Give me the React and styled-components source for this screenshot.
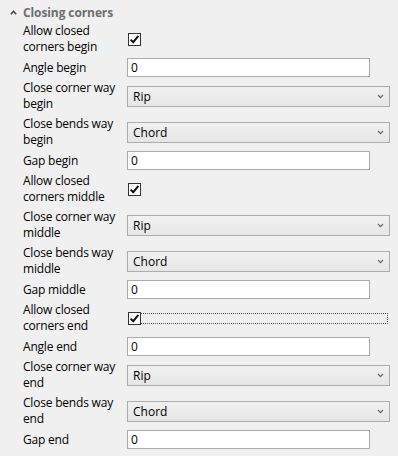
import React from "react";
import styled, { createGlobalStyle } from "styled-components";

const Global = createGlobalStyle`
  html, body { margin: 0; padding: 0; background: #f0f0f0; }
  body { font-family: "Open Sans", "Noto Sans", sans-serif; font-size: 12px; color: #000; }
`;

const Panel = styled.div`
  width: 398px;
  height: 456px;
  padding-top: 4px;
  box-sizing: border-box;
  background: #f0f0f0;
  overflow: hidden;
`;

const Header = styled.div`
  display: flex;
  align-items: center;
  height: 17px;
  padding-left: 10px;
  gap: 6px;
`;

const HeaderTitle = styled.span`
  font-weight: 700;
  color: #6e6e6e;
  font-size: 12px;
  letter-spacing: -0.1px;
`;

const Row = styled.div`
  display: grid;
  grid-template-columns: 104px 1fr;
  align-items: center;
  height: ${(p) => (p.$tall ? 36 : 21)}px;
  padding-left: 23px;
`;

const Label = styled.div`
  line-height: 16px;
  font-size: 12px;
  letter-spacing: -0.2px;
  white-space: nowrap;
`;

const LabelLine = styled.span`
  display: block;
`;

const TextBox = styled.div`
  box-sizing: border-box;
  width: 243px;
  height: 19px;
  background: #fff;
  border: 1px solid #ababab;
  padding-left: 3px;
  display: flex;
  align-items: center;
  line-height: 15px;
`;

const Select = styled.div`
  box-sizing: border-box;
  width: 263px;
  height: 21px;
  border: 1px solid #acacac;
  background: linear-gradient(#f1f1f1, #e6e6e6);
  display: flex;
  align-items: center;
  justify-content: space-between;
  padding: 0 5px 0 5px;
`;

const FocusWrap = styled.div`
  box-sizing: border-box;
  width: 260px;
  height: 11px;
  display: flex;
  align-items: center;
  border: 1px dotted ${(p) => (p.$focused ? "#555" : "transparent")};
  margin-left: 1px;
`;

const Box = styled.div`
  box-sizing: border-box;
  width: 13px;
  height: 13px;
  margin-left: -1px;
  flex: none;
  border: 1px solid #333;
  background: #fff;
  display: flex;
  align-items: center;
  justify-content: center;
`;

const Caret = () => (
  <svg width="7" height="5" viewBox="0 0 7 5">
    <path d="M0.8 4.2 L3.5 1.3 L6.2 4.2" fill="none" stroke="#444" strokeWidth="1.6" />
  </svg>
);

const Chevron = () => (
  <svg width="7" height="5" viewBox="0 0 7 5">
    <path d="M1 1 L3.5 3.6 L6 1" fill="none" stroke="#666" strokeWidth="1.2" />
  </svg>
);

const Check = () => (
  <svg width="11" height="11" viewBox="0 0 11 11">
    <path d="M1.6 5.6 L4.2 8.2 L9.4 1.8" fill="none" stroke="#111" strokeWidth="2" />
  </svg>
);

const rows = [
  { label: ["Allow closed", "corners begin"], kind: "check" },
  { label: ["Angle begin"], kind: "text", value: "0" },
  { label: ["Close corner way", "begin"], kind: "select", value: "Rip" },
  { label: ["Close bends way", "begin"], kind: "select", value: "Chord" },
  { label: ["Gap begin"], kind: "text", value: "0" },
  { label: ["Allow closed", "corners middle"], kind: "check" },
  { label: ["Close corner way", "middle"], kind: "select", value: "Rip" },
  { label: ["Close bends way", "middle"], kind: "select", value: "Chord" },
  { label: ["Gap middle"], kind: "text", value: "0" },
  { label: ["Allow closed", "corners end"], kind: "check", focused: true },
  { label: ["Angle end"], kind: "text", value: "0" },
  { label: ["Close corner way", "end"], kind: "select", value: "Rip" },
  { label: ["Close bends way", "end"], kind: "select", value: "Chord" },
  { label: ["Gap end"], kind: "text", value: "0" },
];

function Control({ row }) {
  if (row.kind === "check")
    return (
      <FocusWrap $focused={row.focused}>
        <Box>
          <Check />
        </Box>
      </FocusWrap>
    );
  if (row.kind === "text") return <TextBox>{row.value}</TextBox>;
  return (
    <Select>
      <span>{row.value}</span>
      <Chevron />
    </Select>
  );
}

export default function App() {
  return (
    <>
      <Global />
      <Panel>
        <Header>
          <Caret />
          <HeaderTitle>Closing corners</HeaderTitle>
        </Header>
        {rows.map((r, i) => (
          <Row key={i} $tall={r.label.length > 1}>
            <Label>
              {r.label.map((l, j) => (
                <LabelLine key={j}>{l}</LabelLine>
              ))}
            </Label>
            <Control row={r} />
          </Row>
        ))}
      </Panel>
    </>
  );
}
